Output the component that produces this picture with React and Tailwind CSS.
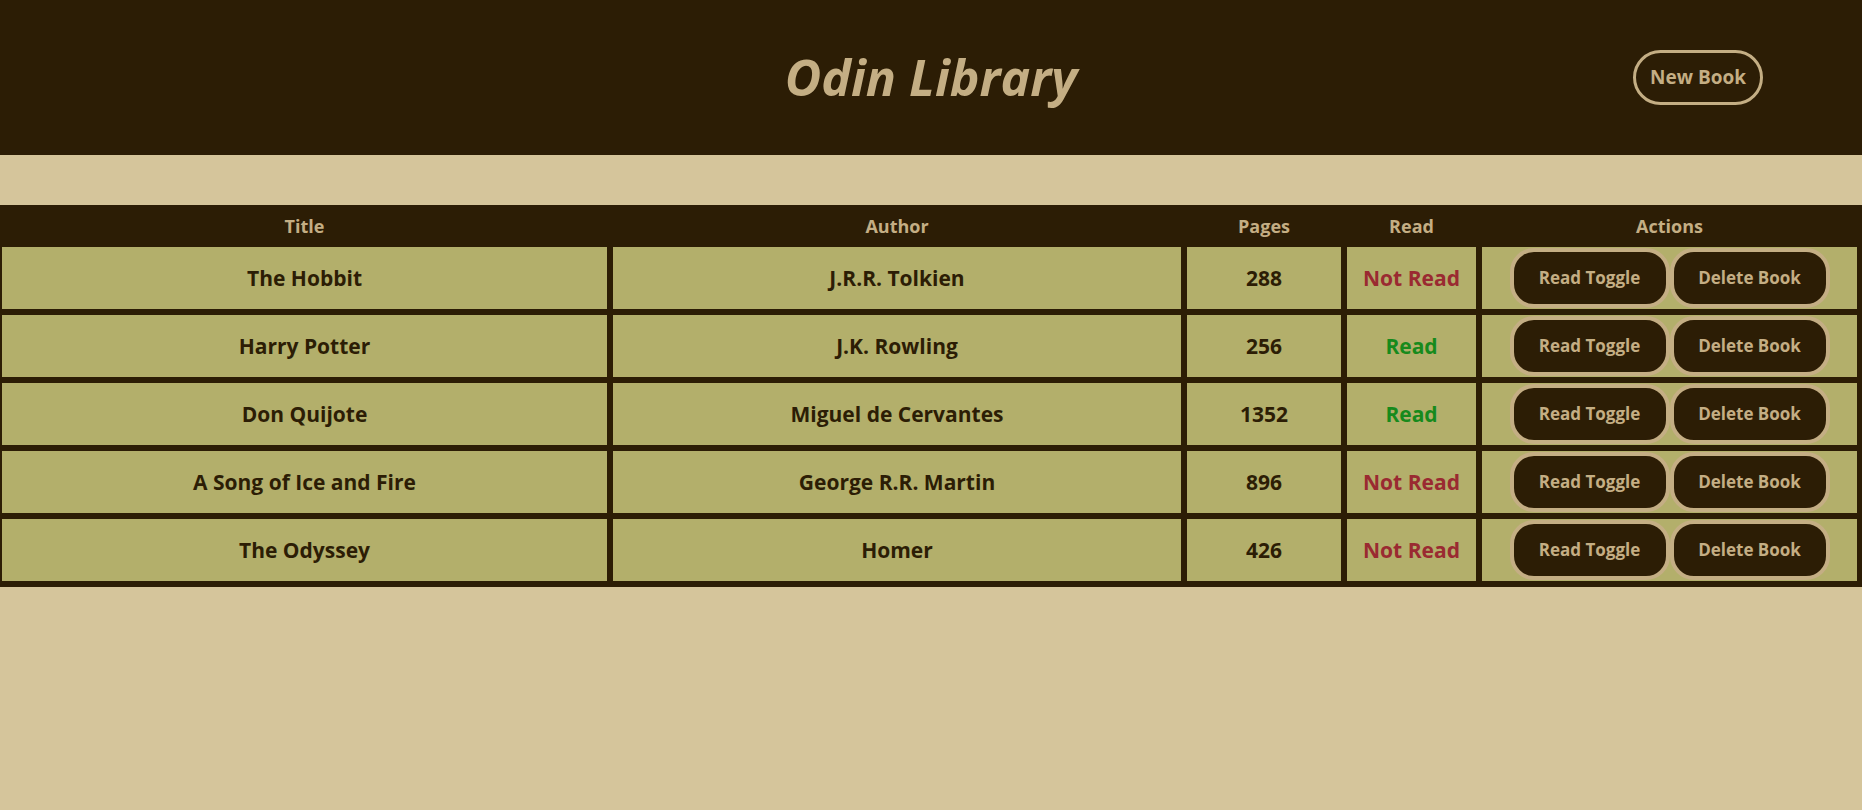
import React from 'react';

const books = [
    { title: 'The Hobbit', author: 'J.R.R. Tolkien', pages: 288, read: false },
    { title: 'Harry Potter', author: 'J.K. Rowling', pages: 256, read: true },
    { title: 'Don Quijote', author: 'Miguel de Cervantes', pages: 1352, read: true },
    { title: 'A Song of Ice and Fire', author: 'George R.R. Martin', pages: 896, read: false },
    { title: 'The Odyssey', author: 'Homer', pages: 426, read: false },
];

const cols = 'grid grid-cols-[605px_568px_154px_129px_375px] gap-x-[6px]';

const Cell = ({ children, className = '' }) => (
    <div className={`flex h-[62px] items-center justify-center bg-[#b3af6b] pt-[2px] text-[21px] font-bold text-[#2c1d05] ${className}`}>
        {children}
    </div>
);

const ActionButton = ({ children }) => (
    <button
        type="button"
        className="-mt-[2px] h-[60px] w-[160px] rounded-[24px] border-4 border-[#c4ae84] bg-[#2c1d05] text-[17px] font-bold text-[#c4ae84]"
    >
        {children}
    </button>
);

export default function App() {
    return (
        <div className="min-h-screen bg-[#d5c59b] font-['Open_Sans',sans-serif]">
            {/* Header */}
            <header className="grid h-[155px] grid-cols-[1fr_auto_1fr] items-center bg-[#2c1d05]">
                <div />
                <h1 className="text-[50px] font-bold italic text-[#c4ae84]">Odin Library</h1>
                <div className="flex justify-end pr-[99px]">
                    <button
                        type="button"
                        className="h-[55px] w-[130px] rounded-full border-[3px] border-[#c4ae84] text-[19px] font-bold text-[#c4ae84]"
                    >
                        New Book
                    </button>
                </div>
            </header>

            {/* Book table */}
            <div className="mt-[50px] bg-[#2c1d05] pb-[6px] pl-[2px] pr-[5px]">
                <div className={`${cols} h-[42px] items-center pt-[1px] text-center text-[18px] font-bold text-[#c4ae84]`}>
                    <span>Title</span>
                    <span>Author</span>
                    <span>Pages</span>
                    <span>Read</span>
                    <span>Actions</span>
                </div>
                <div className={`${cols} gap-y-[6px]`}>
                    {books.map(book => (
                        <React.Fragment key={book.title}>
                            <Cell>{book.title}</Cell>
                            <Cell>{book.author}</Cell>
                            <Cell>{book.pages}</Cell>
                            <Cell className={book.read ? 'text-[#178a1c]' : 'text-[#9a2a31]'}>
                                {book.read ? 'Read' : 'Not Read'}
                            </Cell>
                            <Cell>
                                <ActionButton>Read Toggle</ActionButton>
                                <ActionButton>Delete Book</ActionButton>
                            </Cell>
                        </React.Fragment>
                    ))}
                </div>
            </div>
        </div>
    );
}
